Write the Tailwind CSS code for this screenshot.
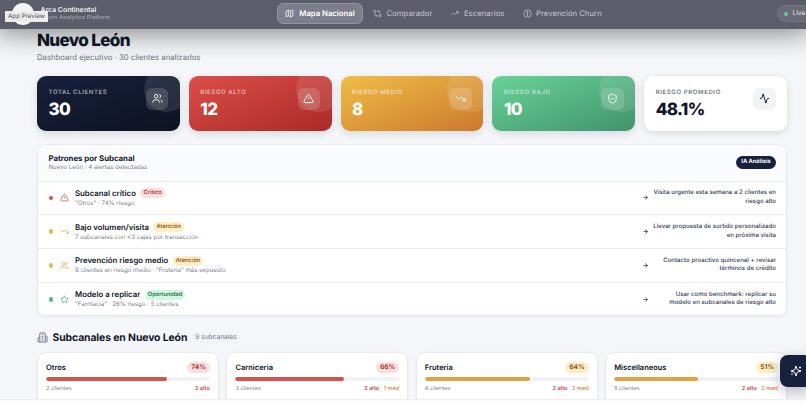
<!DOCTYPE html>
<html lang="es">
<head>
<meta charset="utf-8">
<title>Nuevo León</title>
<script src="https://cdn.jsdelivr.net/npm/@tailwindcss/browser@4"></script>
</head>
<body class="w-[806px] h-[404px] overflow-hidden bg-[#fbfbfc] font-['Inter',sans-serif] text-[#10172a] [text-rendering:geometricPrecision]">
<svg class="hidden">
  <defs>
    <g id="users"><path d="M16 21v-2a4 4 0 0 0-4-4H6a4 4 0 0 0-4 4v2"/><circle cx="9" cy="7" r="4"/><path d="M22 21v-2a4 4 0 0 0-3-3.87M16 3.13a4 4 0 0 1 0 7.75"/></g>
    <g id="alert"><path d="m21.73 18-8-14a2 2 0 0 0-3.48 0l-8 14A2 2 0 0 0 4 21h16a2 2 0 0 0 1.73-3"/><path d="M12 9v4M12 17h.01"/></g>
    <g id="down"><path d="m22 17-8.5-8.5-5 5L2 7"/><path d="M16 17h6v-6"/></g>
    <g id="up"><path d="m22 7-8.5 8.5-5-5L2 17"/><path d="M16 7h6v6"/></g>
    <g id="shield"><path d="M20 13c0 5-3.500 7.500-7.660 8.950a1 1 0 0 1-.67-.01C7.500 20.500 4 18 4 13V6a1 1 0 0 1 1-1c2 0 4.500-1.200 6.240-2.720a1.170 1.170 0 0 1 1.520 0C14.510 3.810 17 5 19 5a1 1 0 0 1 1 1z"/><path d="m9 12 2 2 4-4"/></g>
    <g id="pulse"><path d="M22 12h-2.500a2 2 0 0 0-1.930 1.460l-2.350 8.360a.25.25 0 0 1-.48 0L9.240 2.180a.25.25 0 0 0-.48 0l-2.350 8.360A2 2 0 0 1 4.490 12H2"/></g>
    <g id="star"><path d="m12 2 3.090 6.260L22 9.270l-5 4.870 1.180 6.880L12 17.770l-6.180 3.250L7 14.140 2 9.270l6.910-1.010z"/></g>
    <g id="arrow"><path d="M5 12h14M12 5l7 7-7 7"/></g>
  </defs>
</svg>

<div class="relative flex h-[400px] flex-col overflow-hidden border-b border-[#eceef1] bg-[#f5f6f9]">
  <header class="relative z-10 grid h-[29px] shrink-0 grid-cols-[277px_1fr_29px] items-center bg-[#5b5d6b] pb-[2px] shadow-[0_0_28px_4px_rgba(0,0,0,0.48)]">
    <div class="flex items-center pl-3">
      <div class="flex size-[22px] shrink-0 items-center justify-center rounded-full bg-[#f5f5f6]"><i class="mb-1 h-[2px] w-[9px] bg-[#d3625e]"></i></div>
      <div class="ml-[6.500px] mt-[1px] leading-[8px]">
        <div class="text-[6.900px] font-semibold text-white/95">Arca Continental</div>
        <div class="text-[5.600px] font-medium tracking-[0.120px] text-white/45">Churn Analytics Platform</div>
      </div>
    </div>
    <nav class="flex items-center text-[7.700px] font-medium text-[#b9bac4]">
      <a class="flex h-[21px] w-[86px] items-center justify-center gap-[5px] rounded-[6px] border border-[#9292a0] bg-[#7d7e8b] font-semibold text-white"><svg class="size-[9px] fill-none stroke-current stroke-2" viewBox="0 0 24 24"><path d="m3 6 6-3 6 3 6-3v15l-6 3-6-3-6 3zM9 3v15M15 6v15"/></svg>Mapa Nacional</a>
      <a class="ml-[10px] flex items-center gap-[4.500px]"><svg class="size-[9px] fill-none stroke-current stroke-2" viewBox="0 0 24 24"><circle cx="5" cy="6" r="3"/><path d="M12 6h5a2 2 0 0 1 2 2v7M15 9l-3-3 3-3"/><circle cx="19" cy="18" r="3"/><path d="M12 18H7a2 2 0 0 1-2-2V9M9 15l3 3-3 3"/></svg>Comparador</a>
      <a class="ml-[18px] flex items-center gap-[4.500px]"><svg class="size-[9px] fill-none stroke-current stroke-2" viewBox="0 0 24 24"><use href="#up"/></svg>Escenarios</a>
      <a class="ml-[18px] flex items-center gap-[4.500px]"><svg class="size-[9px] fill-none stroke-current stroke-2" viewBox="0 0 24 24"><path d="M12 18V5M15 13a4.170 4.170 0 0 1-3-4 4.170 4.170 0 0 1-3 4M17.600 6.500A3 3 0 1 0 12 5a3 3 0 1 0-5.600 1.500M18 5.130a4 4 0 0 1 2.530 5.770M18 18a4 4 0 0 0 2-7.460M20 17.480A4 4 0 1 1 12 18a4 4 0 1 1-8-.52M6 18a4 4 0 0 1-2-7.460M6 5.130a4 4 0 0 0-2.530 5.770"/></svg>Prevención Churn</a>
    </nav>
    <div class="flex h-[17px] w-[40px] items-center gap-[4.500px] rounded-full border border-[#737581] bg-[#696b77] pl-[6px] text-[6.500px] font-medium text-[#dedfe5]"><i class="size-[4px] shrink-0 rounded-full bg-[#69c99c]"></i>Live</div>
  </header>
  <div class="absolute left-[5px] top-[11px] z-20 flex h-[11px] w-[43px] items-center justify-center bg-[#ececed] text-[6.200px] text-[#4b4b50]">App Preview</div>

  <main class="flex w-[787px] flex-col pl-[37px]">
    <div class="h-[47px] pt-[2px]">
      <h1 class="text-[17px] font-extrabold leading-[20px] tracking-[-0.650px]">Nuevo León</h1>
      <p class="mt-[2px] text-[7.750px] leading-[9px] text-[#6f7482]">Dashboard ejecutivo · 30 clientes analizados</p>
    </div>

    <section class="grid grid-cols-5 gap-[9px]">
      <div class="relative flex h-[54.500px] justify-between overflow-hidden rounded-[9px] bg-linear-to-br from-[#17203d] to-[#0e1322] px-[11.500px] text-white shadow-[0_3px_8px_rgba(15,23,42,0.12)]">
        <i class="absolute -right-[9px] -top-[9px] size-[45px] rounded-full bg-white/10"></i>
        <div class="pt-[13px]"><div class="text-[6px] font-semibold leading-[8px] tracking-[0.620px] text-white/60">TOTAL CLIENTES</div><div class="mt-[3px] text-[17px] font-extrabold leading-[20px] tracking-[-0.650px]">30</div></div>
        <div class="relative mt-[11.500px] flex size-[22.500px] items-center justify-center rounded-[6px] bg-white/15"><svg class="size-[11px] fill-none stroke-current stroke-2" viewBox="0 0 24 24"><use href="#users"/></svg></div>
      </div>
      <div class="relative flex h-[54.500px] justify-between overflow-hidden rounded-[9px] bg-linear-to-br from-[#dc4e49] to-[#aa2a27] px-[11.500px] text-white shadow-[0_3px_8px_rgba(15,23,42,0.12)]">
        <i class="absolute -right-[9px] -top-[9px] size-[45px] rounded-full bg-white/10"></i>
        <div class="pt-[13px]"><div class="text-[6px] font-semibold leading-[8px] tracking-[0.620px] text-white/60">RIESGO ALTO</div><div class="mt-[3px] text-[17px] font-extrabold leading-[20px] tracking-[-0.650px]">12</div></div>
        <div class="relative mt-[11.500px] flex size-[22.500px] items-center justify-center rounded-[6px] bg-white/15"><svg class="size-[11px] fill-none stroke-current stroke-2" viewBox="0 0 24 24"><use href="#alert"/></svg></div>
      </div>
      <div class="relative flex h-[54.500px] justify-between overflow-hidden rounded-[9px] bg-linear-to-br from-[#efbd48] to-[#cb792c] px-[11.500px] text-white shadow-[0_3px_8px_rgba(15,23,42,0.12)]">
        <i class="absolute -right-[9px] -top-[9px] size-[45px] rounded-full bg-white/10"></i>
        <div class="pt-[13px]"><div class="text-[6px] font-semibold leading-[8px] tracking-[0.620px] text-white/60">RIESGO MEDIO</div><div class="mt-[3px] text-[17px] font-extrabold leading-[20px] tracking-[-0.650px]">8</div></div>
        <div class="relative mt-[11.500px] flex size-[22.500px] items-center justify-center rounded-[6px] bg-white/15"><svg class="size-[11px] fill-none stroke-current stroke-2" viewBox="0 0 24 24"><use href="#down"/></svg></div>
      </div>
      <div class="relative flex h-[54.500px] justify-between overflow-hidden rounded-[9px] bg-linear-to-br from-[#68d398] to-[#42936b] px-[11.500px] text-white shadow-[0_3px_8px_rgba(15,23,42,0.12)]">
        <i class="absolute -right-[9px] -top-[9px] size-[45px] rounded-full bg-white/10"></i>
        <div class="pt-[13px]"><div class="text-[6px] font-semibold leading-[8px] tracking-[0.620px] text-white/60">RIESGO BAJO</div><div class="mt-[3px] text-[17px] font-extrabold leading-[20px] tracking-[-0.650px]">10</div></div>
        <div class="relative mt-[11.500px] flex size-[22.500px] items-center justify-center rounded-[6px] bg-white/15"><svg class="size-[11px] fill-none stroke-current stroke-2" viewBox="0 0 24 24"><use href="#shield"/></svg></div>
      </div>
      <div class="flex h-[54.500px] justify-between rounded-[9px] bg-white px-[11.500px] shadow-[0_2px_7px_rgba(15,23,42,0.13)]">
        <div class="pt-[13px]"><div class="text-[6px] font-semibold leading-[8px] tracking-[0.620px] text-[#6f7482]">RIESGO PROMEDIO</div><div class="mt-[3px] text-[17px] font-extrabold leading-[20px] tracking-[-0.650px]">48.1%</div></div>
        <div class="mt-[11.500px] flex size-[22.500px] items-center justify-center rounded-[6px] bg-[#f2f3f5]"><svg class="size-[11px] fill-none stroke-current stroke-2" viewBox="0 0 24 24"><use href="#pulse"/></svg></div>
      </div>
    </section>

    <section class="mt-[13.500px] h-[172px] overflow-hidden rounded-[9px] border border-[#e9ebef] bg-white shadow-[0_1px_3px_rgba(15,23,42,0.05)]">
      <div class="flex h-[35.500px] items-center justify-between bg-[#fafbfd] pl-[10.500px] pr-[10px]">
        <div><h2 class="text-[7.800px] font-bold leading-[10px]">Patrones por Subcanal</h2><p class="text-[6.100px] leading-[10px] text-[#7b808d]">Nuevo León · 4 alertas detectadas</p></div>
        <span class="flex h-[13px] w-[40px] items-center justify-center rounded-full bg-[#17203d] text-[5.700px] font-bold text-white">IA Análisis</span>
      </div>
      <div class="flex h-[33.800px] items-center border-t border-[#e9ebef] pl-[10.500px] pr-[10px]">
        <i class="size-[4.500px] rounded-full bg-[#d6504d]"></i>
        <svg class="ml-[7px] size-[9px] fill-none stroke-[#d6504d] stroke-2" viewBox="0 0 24 24"><use href="#alert"/></svg>
        <div class="ml-[6px] flex-1"><div class="flex items-center gap-[4.500px]"><b class="text-[7.800px] font-semibold leading-[11px]">Subcanal crítico</b><span class="rounded-full bg-[#fbdfdf] px-[3px] text-[5.700px] font-semibold leading-[10px] text-[#ad3534]">Crítico</span></div><p class="text-[6.100px] leading-[9px] text-[#7b808d]">"Otros" · 74% riesgo</p></div>
        <svg class="size-[7px] fill-none stroke-[#26304a] stroke-[2.500]" viewBox="0 0 24 24"><use href="#arrow"/></svg>
        <p class="w-[127px] text-right text-[6.100px] font-medium leading-[8.500px] text-[#343c56]">Visita urgente esta semana a 2 clientes en<br>riesgo alto</p>
      </div>
      <div class="flex h-[33.800px] items-center border-t border-[#e9ebef] pl-[10.500px] pr-[10px]">
        <i class="size-[4.500px] rounded-full bg-[#eab94e]"></i>
        <svg class="ml-[7px] size-[9px] fill-none stroke-[#e2a54c] stroke-2" viewBox="0 0 24 24"><use href="#down"/></svg>
        <div class="ml-[6px] flex-1"><div class="flex items-center gap-[4.500px]"><b class="text-[7.800px] font-semibold leading-[11px]">Bajo volumen/visita</b><span class="rounded-full bg-[#fcefc5] px-[3px] text-[5.700px] font-semibold leading-[10px] text-[#a05a27]">Atención</span></div><p class="text-[6.100px] leading-[9px] text-[#7b808d]">7 subcanales con &lt;3 cajas por transacción</p></div>
        <svg class="size-[7px] fill-none stroke-[#26304a] stroke-[2.500]" viewBox="0 0 24 24"><use href="#arrow"/></svg>
        <p class="w-[127px] text-right text-[6.100px] font-medium leading-[8.500px] text-[#343c56]">Llevar propuesta de surtido personalizado<br>en próxima visita</p>
      </div>
      <div class="flex h-[33.800px] items-center border-t border-[#e9ebef] pl-[10.500px] pr-[10px]">
        <i class="size-[4.500px] rounded-full bg-[#eab94e]"></i>
        <svg class="ml-[7px] size-[9px] fill-none stroke-[#e2a54c] stroke-2" viewBox="0 0 24 24"><use href="#users"/></svg>
        <div class="ml-[6px] flex-1"><div class="flex items-center gap-[4.500px]"><b class="text-[7.800px] font-semibold leading-[11px]">Prevención riesgo medio</b><span class="rounded-full bg-[#fcefc5] px-[3px] text-[5.700px] font-semibold leading-[10px] text-[#a05a27]">Atención</span></div><p class="text-[6.100px] leading-[9px] text-[#7b808d]">8 clientes en riesgo medio · "Fruteria" más expuesto</p></div>
        <svg class="size-[7px] fill-none stroke-[#26304a] stroke-[2.500]" viewBox="0 0 24 24"><use href="#arrow"/></svg>
        <p class="w-[127px] text-right text-[6.100px] font-medium leading-[8.500px] text-[#343c56]">Contacto proactivo quincenal + revisar<br>términos de crédito</p>
      </div>
      <div class="flex h-[33.800px] items-center border-t border-[#e9ebef] pl-[10.500px] pr-[10px]">
        <i class="size-[4.500px] rounded-full bg-[#55b384]"></i>
        <svg class="ml-[7px] size-[9px] fill-none stroke-[#55b384] stroke-2" viewBox="0 0 24 24"><use href="#star"/></svg>
        <div class="ml-[6px] flex-1"><div class="flex items-center gap-[4.500px]"><b class="text-[7.800px] font-semibold leading-[11px]">Modelo a replicar</b><span class="rounded-full bg-[#d1f7e0] px-[3px] text-[5.700px] font-semibold leading-[10px] text-[#2c7650]">Oportunidad</span></div><p class="text-[6.100px] leading-[9px] text-[#7b808d]">"Farmacia" · 26% riesgo · 5 clientes</p></div>
        <svg class="size-[7px] fill-none stroke-[#26304a] stroke-[2.500]" viewBox="0 0 24 24"><use href="#arrow"/></svg>
        <p class="w-[127px] text-right text-[6.100px] font-medium leading-[8.500px] text-[#343c56]">Usar como benchmark: replicar su<br>modelo en subcanales de riesgo alto</p>
      </div>
    </section>

    <div class="mt-[15px] flex h-[13px] items-center">
      <svg class="size-[11px] fill-none stroke-[#6f7482] stroke-2" viewBox="0 0 24 24"><path d="M6 22V4a2 2 0 0 1 2-2h8a2 2 0 0 1 2 2v18ZM6 12H4a2 2 0 0 0-2 2v6a2 2 0 0 0 2 2h2M18 9h2a2 2 0 0 1 2 2v9a2 2 0 0 1-2 2h-2M10 6h4M10 10h4M10 14h4M10 18h4"/></svg>
      <h2 class="ml-[4.500px] text-[10.400px] font-bold tracking-[-0.100px]">Subcanales en Nuevo León</h2>
      <span class="ml-[5px] rounded-full bg-[#f2f3f6] px-[3px] text-[6.600px] leading-[11px] text-[#7b808d]">9 subcanales</span>
    </div>

    <section class="mt-[8px] grid grid-cols-4 gap-[7.500px]">
      <article class="h-[70px] rounded-[9px] border border-[#e9ebef] bg-white px-[8px] pt-[9px] shadow-[0_1px_3px_rgba(15,23,42,0.06)]">
        <div class="flex h-[11px] items-center justify-between"><h3 class="text-[7.500px] font-semibold">Otros</h3><span class="flex h-[11px] items-center rounded-full bg-[#fbdfdf] px-[4px] text-[6.600px] font-bold text-[#a93535]">74%</span></div>
        <div class="mt-[4px] h-[3.500px] overflow-hidden rounded-full bg-[#f1f2f5]"><div class="h-full rounded-full bg-[#d6524f]" style="width:74%"></div></div>
        <div class="mt-[4px] flex justify-between text-[5.600px] leading-[9px] text-[#7b808d]"><span>2 clientes</span><span class="flex gap-[4.500px] font-semibold text-[#c94440]"><span>2 alto</span></span></div>
      </article>
      <article class="h-[70px] rounded-[9px] border border-[#e9ebef] bg-white px-[8px] pt-[9px] shadow-[0_1px_3px_rgba(15,23,42,0.06)]">
        <div class="flex h-[11px] items-center justify-between"><h3 class="text-[7.500px] font-semibold">Carniceria</h3><span class="flex h-[11px] items-center rounded-full bg-[#fbdfdf] px-[4px] text-[6.600px] font-bold text-[#a93535]">66%</span></div>
        <div class="mt-[4px] h-[3.500px] overflow-hidden rounded-full bg-[#f1f2f5]"><div class="h-full rounded-full bg-[#d6524f]" style="width:66%"></div></div>
        <div class="mt-[4px] flex justify-between text-[5.600px] leading-[9px] text-[#7b808d]"><span>3 clientes</span><span class="flex gap-[4.500px] font-semibold text-[#c94440]"><span>2 alto</span><span class="font-medium text-[#cb813d]">1 med</span></span></div>
      </article>
      <article class="h-[70px] rounded-[9px] border border-[#e9ebef] bg-white px-[8px] pt-[9px] shadow-[0_1px_3px_rgba(15,23,42,0.06)]">
        <div class="flex h-[11px] items-center justify-between"><h3 class="text-[7.500px] font-semibold">Fruteria</h3><span class="flex h-[11px] items-center rounded-full bg-[#fcefc5] px-[4px] text-[6.600px] font-bold text-[#925020]">64%</span></div>
        <div class="mt-[4px] h-[3.500px] overflow-hidden rounded-full bg-[#f1f2f5]"><div class="h-full rounded-full bg-[#e0a243]" style="width:64%"></div></div>
        <div class="mt-[4px] flex justify-between text-[5.600px] leading-[9px] text-[#7b808d]"><span>4 clientes</span><span class="flex gap-[4.500px] font-semibold text-[#c94440]"><span>2 alto</span><span class="font-medium text-[#cb813d]">2 med</span></span></div>
      </article>
      <article class="h-[70px] rounded-[9px] border border-[#e9ebef] bg-white px-[8px] pt-[9px] shadow-[0_1px_3px_rgba(15,23,42,0.06)]">
        <div class="flex h-[11px] items-center justify-between"><h3 class="text-[7.500px] font-semibold">Miscellaneous</h3><span class="flex h-[11px] items-center rounded-full bg-[#fcefc5] px-[4px] text-[6.600px] font-bold text-[#925020]">51%</span></div>
        <div class="mt-[4px] h-[3.500px] overflow-hidden rounded-full bg-[#f1f2f5]"><div class="h-full rounded-full bg-[#e0a243]" style="width:51%"></div></div>
        <div class="mt-[4px] flex justify-between text-[5.600px] leading-[9px] text-[#7b808d]"><span>5 clientes</span><span class="flex gap-[4.500px] font-semibold text-[#c94440]"><span>2 alto</span><span class="font-medium text-[#cb813d]">2 med</span></span></div>
      </article>
    </section>
  </main>

  <button class="absolute left-[780px] top-[355px] flex size-[32px] items-center justify-center rounded-[8px] bg-[#17203d] text-white shadow-[0_4px_14px_rgba(15,23,42,0.28)]"><svg class="size-[12px] fill-none stroke-current stroke-2" viewBox="0 0 24 24"><path d="M9.940 15.500A2 2 0 0 0 8.500 14.060l-6.140-1.580a.5.5 0 0 1 0-.96L8.500 9.940A2 2 0 0 0 9.940 8.500l1.580-6.140a.5.5 0 0 1 .96 0l1.580 6.140A2 2 0 0 0 15.500 9.940l6.140 1.580a.5.5 0 0 1 0 .96L15.500 14.060a2 2 0 0 0-1.440 1.440l-1.580 6.140a.5.5 0 0 1-.96 0zM20 3v4M22 5h-4M4 17v2M5 18H3"/></svg></button>
</div>
</body>
</html>
